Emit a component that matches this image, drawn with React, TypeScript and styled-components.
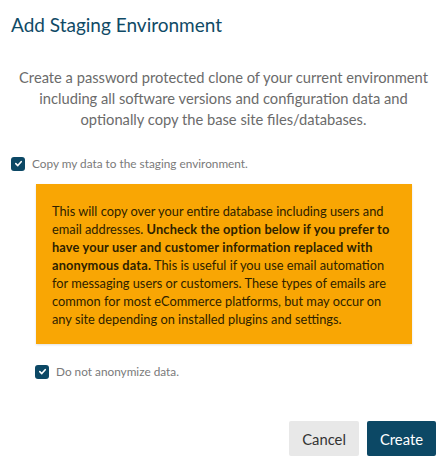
import styled, { createGlobalStyle } from "styled-components";

const GlobalStyle = createGlobalStyle`
  * { box-sizing: border-box; }
  body {
    margin: 0;
    background: #ffffff;
    font-family: Lato, "Noto Sans", sans-serif;
  }
`;

const Modal = styled.div`
  width: 447px;
  height: 474px;
  display: flex;
  flex-direction: column;
  padding: 13px 11px 18px 11px;
`;

const Title = styled.h2`
  margin: 0;
  font-size: 19px;
  font-weight: 400;
  color: #0f4a66;
  line-height: 24px;
`;

const Intro = styled.p`
  margin: 30px 0 0 0;
  text-align: center;
  font-size: 14.7px;
  line-height: 21px;
  color: #6b6b6b;
`;

const CheckRow = styled.label<{ $indent?: number; $top: number }>`
  display: flex;
  align-items: center;
  gap: 7px;
  margin: ${(p) => p.$top}px 0 0 ${(p) => p.$indent ?? 0}px;
  font-size: 11.8px;
  color: #7a7a7a;
`;

const Box = styled.span`
  width: 14px;
  height: 14px;
  border-radius: 3px;
  background: #0c4865;
  display: flex;
  align-items: center;
  justify-content: center;
`;

const Warning = styled.div`
  margin: 13px 24px 0 25px;
  padding: 18px 14px 16px 16px;
  background: #f9a604;
  box-shadow: 0 1px 2px rgba(0, 0, 0, 0.12);
  font-size: 12.8px;
  line-height: 18px;
  color: #2e2200;

  strong {
    font-weight: 700;
    letter-spacing: 0.15px;
  }
`;

const Footer = styled.div`
  margin-top: auto;
  display: flex;
  justify-content: flex-end;
  gap: 8px;
`;

const Button = styled.button<{ $primary?: boolean }>`
  height: 35px;
  padding: 0 13px;
  border: none;
  border-radius: 2px;
  font-family: inherit;
  font-size: 14.8px;
  background: ${(p) => (p.$primary ? "#0c4865" : "#e8e8e8")};
  color: ${(p) => (p.$primary ? "#ffffff" : "#333333")};
`;

const Check = () => (
  <Box>
    <svg width="9" height="9" viewBox="0 0 10 10">
      <path d="M2 5.2 L4.2 7.3 L8 3" fill="none" stroke="#fff" strokeWidth="1.8" strokeLinecap="round" strokeLinejoin="round" />
    </svg>
  </Box>
);

export default function App() {
  return (
    <>
      <GlobalStyle />
      <Modal>
        <Title>Add Staging Environment</Title>
        <Intro>
          Create a password protected clone of your current environment including all software versions and
          configuration data and optionally copy the base site files/databases.
        </Intro>
        <CheckRow $top={26}>
          <Check />
          Copy my data to the staging environment.
        </CheckRow>
        <Warning>
          This will copy over your entire database including users and email addresses.{" "}
          <strong>Uncheck the option below if you prefer to have your user and customer information replaced with anonymous data.</strong>{" "}
          This is useful if you use email automation for messaging users or customers. These types of emails are common
          for most eCommerce platforms, but may occur on any site depending on installed plugins and settings.
        </Warning>
        <CheckRow $top={20} $indent={24}>
          <Check />
          Do not anonymize data.
        </CheckRow>
        <Footer>
          <Button>Cancel</Button>
          <Button $primary>Create</Button>
        </Footer>
      </Modal>
    </>
  );
}
